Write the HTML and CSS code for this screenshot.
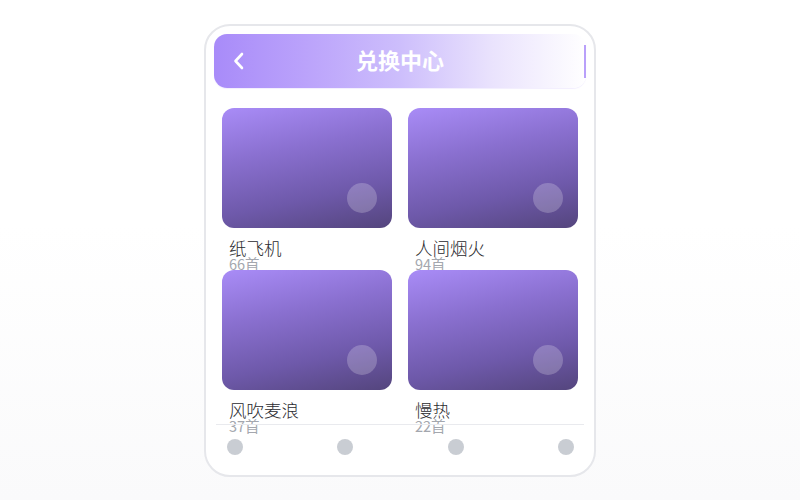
FILE: index.html
```html
<!DOCTYPE html>
<html lang="zh">
<head>
<meta charset="utf-8">
<title>兑换中心</title>
<link rel="stylesheet" href="styles.css">
</head>
<body>
<div class="phone">
  <div class="content">
    <header class="topbar">
      <span class="back">
        <svg width="14" height="20" viewBox="0 0 14 20"><path d="M10 3 L3.5 10 L10 17" fill="none" stroke="#fff" stroke-width="2.6" stroke-linecap="round" stroke-linejoin="round"/></svg>
      </span>
      <h1 class="title">兑换中心</h1>
      <span class="edge"></span>
    </header>
    <div class="grid">
      <div class="item">
        <div class="cover"><span class="dot"></span></div>
        <div class="name">纸飞机</div>
        <div class="count">66首</div>
      </div>
      <div class="item">
        <div class="cover"><span class="dot"></span></div>
        <div class="name">人间烟火</div>
        <div class="count">94首</div>
      </div>
      <div class="item">
        <div class="cover"><span class="dot"></span></div>
        <div class="name">风吹麦浪</div>
        <div class="count">37首</div>
      </div>
      <div class="item">
        <div class="cover"><span class="dot"></span></div>
        <div class="name">慢热</div>
        <div class="count">22首</div>
      </div>
    </div>
  </div>
  <nav class="tabbar">
    <span class="tab"></span>
    <span class="tab"></span>
    <span class="tab"></span>
    <span class="tab"></span>
  </nav>
</div>
</body>
</html>
```
FILE: styles.css
```css
html, body {
  margin: 0;
  padding: 0;
}
body {
  width: 800px;
  height: 500px;
  background: linear-gradient(#ffffff 0%, #ffffff 45%, #fafafb 100%);
  font-family: "Noto Sans CJK SC", "Noto Sans", sans-serif;
  overflow: hidden;
}
.phone {
  box-sizing: border-box;
  width: 392px;
  height: 453px;
  margin: 24px auto 0;
  border: 2px solid #e6e7eb;
  border-radius: 26px;
  background: #fff;
  padding: 8px;
  display: flex;
  flex-direction: column;
}
.content {
  height: 390px;
  flex: none;
}
.topbar {
  height: 54px;
  border-radius: 13px;
  background: linear-gradient(90deg, #a88bf9 0%, #bba3fb 25%, #cdbefc 50%, #eae3fd 75%, #ffffff 100%);
  display: flex;
  align-items: center;
  padding-left: 18px;
  box-shadow: 0 1px 1px rgba(167, 139, 250, 0.15);
}
.back {
  width: 14px;
  height: 20px;
  display: flex;
}
.title {
  flex: 1;
  margin: 0;
  text-align: center;
  color: #fff;
  font-size: 22px;
  font-weight: 700;
  line-height: 50px;
  padding: 0 30px 4px 0;
}
.edge {
  width: 2px;
  height: 33px;
  background: #b9a0fa;
}
.grid {
  margin-top: 20px;
  padding: 0 8px;
  display: grid;
  grid-template-columns: 170px 170px;
  column-gap: 16px;
  grid-auto-rows: 162px;
}
.item {
  display: flex;
  flex-direction: column;
  min-height: 0;
}
.cover {
  height: 120px;
  flex: none;
  border-radius: 12px;
  background: linear-gradient(168deg, #a98cf7 0%, #8a70d0 35%, #6e59aa 70%, #54457d 100%);
  display: flex;
  justify-content: flex-end;
  align-items: flex-end;
  padding: 0 15px 15px 0;
  box-sizing: border-box;
}
.dot {
  width: 30px;
  height: 30px;
  border-radius: 50%;
  background: rgba(255, 255, 255, 0.22);
}
.name {
  margin-top: 11px;
  padding-left: 7px;
  font-size: 17.5px;
  font-weight: 300;
  line-height: 18px;
  color: #2a2a2e;
  flex: none;
}
.count {
  padding-left: 7px;
  font-size: 14.5px;
  font-weight: 400;
  line-height: 13px;
  color: #a4a7ae;
  flex: none;
}
.tabbar {
  margin: 0 2px;
  border-top: 1px solid #e9eaee;
  display: flex;
  justify-content: space-between;
  padding: 14px 10px 0 11px;
}
.tab {
  width: 16px;
  height: 16px;
  border-radius: 50%;
  background: #c9cdd3;
}
```
